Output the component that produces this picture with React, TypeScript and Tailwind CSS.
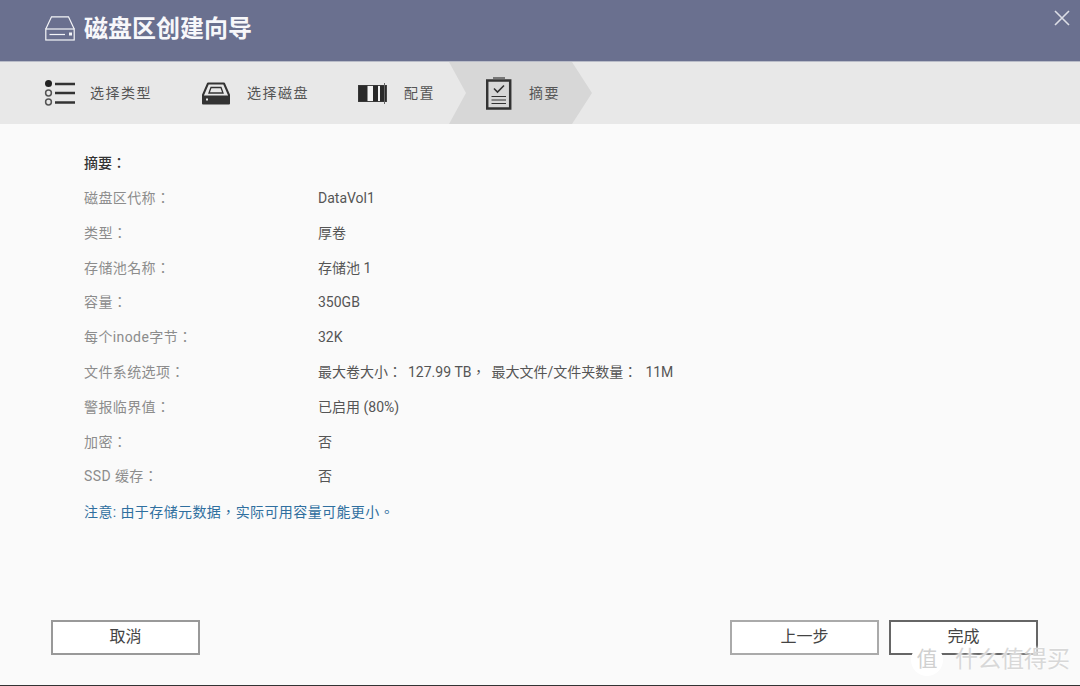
import type { ReactNode } from "react";

const font = "font-['Roboto','Noto_Sans_CJK_TC',sans-serif]";

const rows: [string, ReactNode][] = [
  ["磁盘区代称：", "DataVol1"],
  ["类型：", "厚卷"],
  ["存储池名称：", "存储池 1"],
  ["容量：", "350GB"],
  ["每个inode字节：", "32K"],
  [
    "文件系统选项：",
    <>
      最大卷大小：<span className="ml-[6px]">127.99 TB，</span>
      <span className="ml-[6px]">最大文件/文件夹数量：</span>
      <span className="ml-[8px]">11M</span>
    </>,
  ],
  ["警报临界值：", "已启用 (80%)"],
  ["加密：", "否"],
  ["SSD 缓存：", "否"],
];

const DiskIcon = () => (
  <svg width="30" height="25" viewBox="0 0 30 25" fill="none" stroke="#f4f5f8" strokeWidth="1.2">
    <path d="M0.800 13 L6.500 0.800 H23.500 L29.200 13" />
    <rect x="0.800" y="13" width="28.400" height="11" />
    <path d="M4.500 18.500 H20" />
    <rect x="24" y="16.500" width="3" height="3" fill="#f4f5f8" stroke="none" />
  </svg>
);

const ListIcon = () => (
  <svg width="32" height="26" viewBox="0 0 32 26" fill="none" stroke="#333" strokeWidth="2.400">
    <circle cx="4.500" cy="3.500" r="3.500" fill="#222" stroke="none" />
    <circle cx="4.500" cy="13" r="2.900" stroke="#555" strokeWidth="1.500" />
    <circle cx="4.500" cy="22" r="2.900" stroke="#555" strokeWidth="1.500" />
    <path d="M11 4 H31 M11 13 H31 M11 22.500 H31" />
  </svg>
);

const DriveIcon = () => (
  <svg width="28" height="23" viewBox="0 0 28 23" fill="none">
    <path d="M1 13 L6 1.500 H22 L27 13 V21.500 H1 Z" stroke="#333" strokeWidth="2" strokeLinejoin="round" />
    <path d="M1 13.500 H27 V21.500 H1 Z" fill="#333" />
    <path d="M7 11 L9 5.500 H19 L21 11 Z" stroke="#333" strokeWidth="1.300" />
    <rect x="4" y="16.500" width="2" height="2" fill="#e8e8e8" />
  </svg>
);

const ConfigIcon = () => (
  <svg width="31" height="21" viewBox="0 0 31 21" fill="none">
    <rect x="0.500" y="2.500" width="28" height="16" fill="#f4f4f4" stroke="#444" />
    <rect x="0.500" y="2.500" width="9" height="16" fill="#2a2a2a" />
    <rect x="15" y="2.500" width="5" height="16" fill="#2a2a2a" />
    <rect x="22" y="2.500" width="6" height="16" fill="#2a2a2a" />
    <path d="M26.500 0 V21" stroke="#666" strokeWidth="1" />
  </svg>
);

const SummaryIcon = () => (
  <svg width="26" height="33" viewBox="0 0 26 33" fill="none" stroke="#333">
    <rect x="1.200" y="3.500" width="23" height="28" strokeWidth="2.500" />
    <path d="M7 1 H19" stroke="#777" strokeWidth="2" />
    <path d="M8 11.500 L11.500 15 L18 8.500" strokeWidth="1.600" />
    <path d="M5.500 19.500 H20 M5.500 23 H20 M5.500 26.500 H20" strokeWidth="1.200" />
  </svg>
);

const Button = ({ label, className }: { label: string; className: string }) => (
  <button className={`h-[35px] w-[149px] border-2 bg-white pb-px text-base text-[#444] ${className}`}>
    {label}
  </button>
);

export default function App() {
  return (
    <div className={`relative flex h-[686px] w-[1080px] flex-col overflow-hidden bg-[#fafafa] ${font}`}>
      {/* Title */}
      <header className="flex h-[62px] shrink-0 items-center justify-between border-b border-[#b9bcc8] bg-[#6a708f] pl-[45px] pr-[10px]">
        <div className="mb-[4px] flex items-center gap-[9px]">
          <DiskIcon />
          <h1 className="text-2xl font-bold text-[#f7f7fa]">磁盘区创建向导</h1>
        </div>
        <svg className="mb-[26px]" width="16" height="16" viewBox="0 0 16 16" stroke="#dcdee6" strokeWidth="1.600">
          <path d="M1 1 L15 15 M15 1 L1 15" />
        </svg>
      </header>

      {/* Steps */}
      <nav className="flex h-[62px] shrink-0 items-center bg-[#e8e8e8] pl-[44px] text-sm text-[#555]">
        <div className="flex w-[158px] items-center gap-[14px]">
          <ListIcon />
          <span className="tracking-[1.500px]">选择类型</span>
        </div>
        <div className="flex w-[156px] items-center gap-[17px]">
          <DriveIcon />
          <span className="tracking-[1.500px]">选择磁盘</span>
        </div>
        <div className="flex w-[91px] items-center gap-[15px]">
          <ConfigIcon />
          <span className="tracking-[1.500px]">配置</span>
        </div>
        <div className="flex h-full w-[143px] items-center gap-[17px] bg-[#d7d7d7] pl-[37px] [clip-path:polygon(0_0,123px_0,100%_50%,123px_100%,0_100%,17px_50%)]">
          <SummaryIcon />
          <span className="tracking-[1.500px]">摘要</span>
        </div>
      </nav>

      {/* Summary */}
      <main className="flex flex-1 flex-col pl-[84px] pt-[29px] text-sm">
        <h2 className="flex h-[20px] items-center font-medium text-[#333]">摘要：</h2>
        <dl className="mt-[15px] flex flex-col gap-[14.800px]">
          {rows.map(([label, value]) => (
            <div key={label} className="flex h-[20px] items-center">
              <dt className="w-[234px] tracking-[0.400px] text-[#8c8c8c]">{label}</dt>
              <dd className="text-[#555]">{value}</dd>
            </div>
          ))}
        </dl>
        <p className="mt-[16px] h-[20px] leading-[20px] tracking-[0.400px] text-[#2f6f9f]">注意: 由于存储元数据，实际可用容量可能更小。</p>
      </main>

      {/* Footer */}
      <footer className="flex shrink-0 items-center justify-between pb-[30px] pl-[51px] pr-[42px]">
        <Button label="取消" className="border-[#999]" />
        <div className="flex gap-[10px]">
          <Button label="上一步" className="border-[#aaa]" />
          <Button label="完成" className="border-[#666]" />
        </div>
      </footer>
      <div className="h-px shrink-0 bg-[#333]" />

      {/* Watermark */}
      <div className="absolute left-[911px] top-[644px] flex items-center gap-[12px]">
        <span className="flex h-[32px] w-[32px] items-center justify-center rounded-full bg-white text-[21px] text-[#d0d0d0]">值</span>
        <span className="text-[23px] leading-[32px] text-[#d8d8d8] [text-shadow:0_0_3px_#fff,0_0_3px_#fff]">什么值得买</span>
      </div>
    </div>
  );
}
